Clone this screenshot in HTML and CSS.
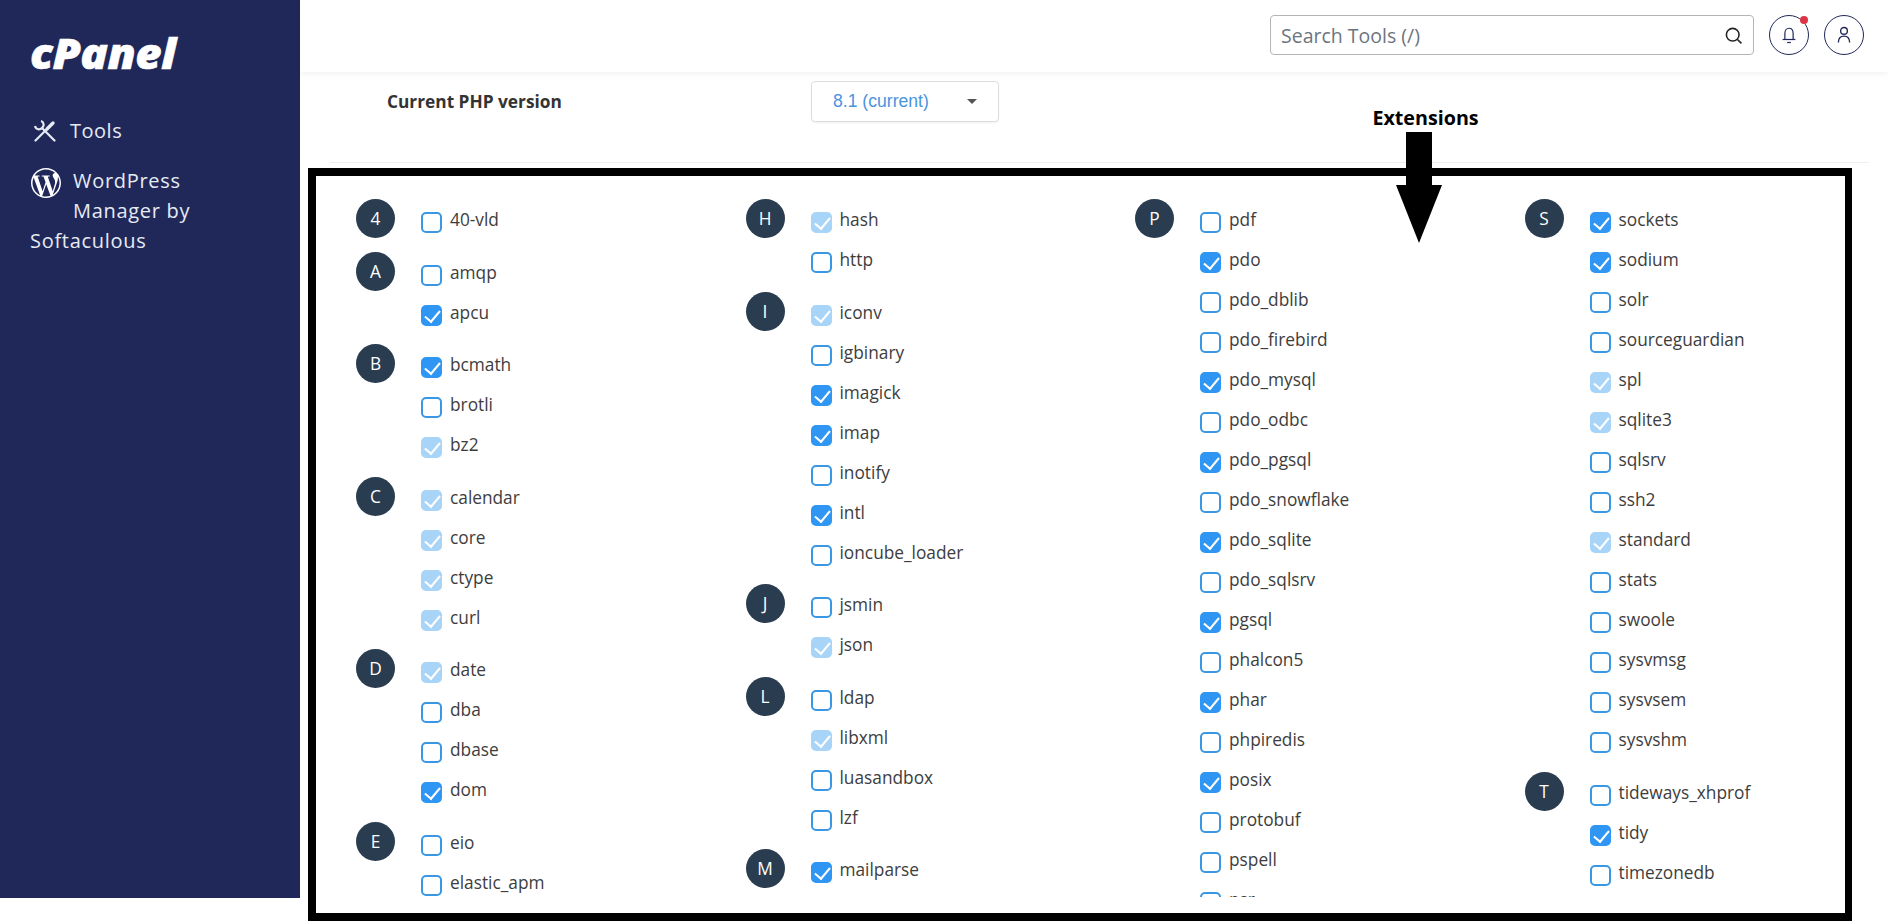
FILE: index.html
```html
<!DOCTYPE html>
<html lang="en">
<head>
  <meta charset="UTF-8">
  <meta name="viewport" content="width=device-width, initial-scale=1.0">
  <title>Select PHP Version</title>
  <link rel="stylesheet" href="styles.css">
</head>
<body>
  <aside class="sidebar">
    <div class="logo">cPanel</div>
    <a class="nav-item nav-tools">
      <svg class="tools-icon" viewBox="0 0 22 22" fill="none" stroke="currentColor" stroke-width="2.2">
        <path d="M7 1 C10 2 10.500 6 8 8 C6 10 2 10 1 6"/>
        <path d="M8 8 L20.500 20.500" stroke-linecap="round"/>
        <path d="M1.500 20.500 L12.500 9.500" stroke-linecap="round"/>
        <path d="M13 9 L19 3" stroke-width="3.4" stroke-linecap="round"/>
      </svg>
      Tools
    </a>
    <a class="nav-item nav-wp">
      <svg class="wp-icon" viewBox="0 0 24 24" fill="currentColor">
        <path d="M21.469 6.825c.84 1.537 1.318 3.3 1.318 5.175 0 3.979-2.156 7.456-5.363 9.325l3.295-9.527c.615-1.54.82-2.771.82-3.864 0-.405-.026-.78-.07-1.11m-7.981.105c.647-.03 1.232-.105 1.232-.105.582-.075.514-.93-.067-.899 0 0-1.755.135-2.88.135-1.064 0-2.85-.15-2.85-.15-.585-.03-.661.855-.075.885 0 0 .54.061 1.125.09l1.68 4.605-2.37 7.08L5.354 6.9c.649-.03 1.234-.1 1.234-.1.585-.075.516-.93-.065-.896 0 0-1.746.138-2.874.138-.2 0-.438-.008-.69-.015C4.911 3.15 8.235 1.215 12 1.215c2.809 0 5.365 1.072 7.286 2.833-.046-.003-.091-.009-.141-.009-1.06 0-1.812.923-1.812 1.914 0 .89.513 1.643 1.06 2.531.411.72.89 1.643.89 2.977 0 .915-.354 1.994-.821 3.479l-1.075 3.585-3.9-11.61.001.014zM12 22.784c-1.059 0-2.081-.153-3.048-.437l3.237-9.406 3.315 9.087c.024.053.05.101.078.149-1.12.393-2.325.609-3.582.609M1.211 12c0-1.564.336-3.05.935-4.39L7.29 21.709C3.694 19.96 1.212 16.271 1.211 12M12 0C5.385 0 0 5.385 0 12s5.385 12 12 12 12-5.385 12-12S18.615 0 12 0"/>
      </svg>
      WordPress Manager by Softaculous
    </a>
  </aside>

  <div class="main">
    <header class="topbar">
      <div class="search">
        <span class="search-text">Search Tools (/)</span>
        <svg class="search-icon" viewBox="0 0 24 24" fill="none" stroke="#222" stroke-width="2">
          <circle cx="11" cy="11" r="8"/>
          <path d="M17 17 L22 22"/>
        </svg>
      </div>
      <button class="round-btn bell">
        <svg viewBox="0 0 24 24" fill="none" stroke="#20285a" stroke-width="1.6">
          <path d="M6.500 18 V10 C6.500 5.500 9 3 12 3 C15 3 17.500 5.500 17.500 10 V18"/>
          <path d="M3.500 18 H20.500"/>
          <path d="M9.500 22 H14.500"/>
        </svg>
        <span class="dot"></span>
      </button>
      <button class="round-btn">
        <svg viewBox="0 0 24 24" fill="none" stroke="#20285a" stroke-width="1.8">
          <circle cx="12" cy="6.500" r="4.500"/>
          <path d="M4.500 22 C4.500 15 8 13.500 12 13.500 C16 13.500 19.500 15 19.500 22"/>
        </svg>
      </button>
    </header>

    <div class="php-row">
      <div class="php-label">Current PHP version</div>
      <div class="php-select">
        <span>8.1 (current)</span>
        <span class="caret"></span>
      </div>
    </div>
    <hr class="divider">

    <div class="frame">
      <div class="ext-list">
        <div class="ext-col">
          <div class="group"><span class="letter">4</span><div class="items">
            <label class="ext"><input type="checkbox">40-vld</label>
          </div></div>
          <div class="group"><span class="letter">A</span><div class="items">
            <label class="ext"><input type="checkbox">amqp</label>
            <label class="ext"><input type="checkbox" checked>apcu</label>
          </div></div>
          <div class="group"><span class="letter">B</span><div class="items">
            <label class="ext"><input type="checkbox" checked>bcmath</label>
            <label class="ext"><input type="checkbox">brotli</label>
            <label class="ext"><input type="checkbox" checked disabled>bz2</label>
          </div></div>
          <div class="group"><span class="letter">C</span><div class="items">
            <label class="ext"><input type="checkbox" checked disabled>calendar</label>
            <label class="ext"><input type="checkbox" checked disabled>core</label>
            <label class="ext"><input type="checkbox" checked disabled>ctype</label>
            <label class="ext"><input type="checkbox" checked disabled>curl</label>
          </div></div>
          <div class="group"><span class="letter">D</span><div class="items">
            <label class="ext"><input type="checkbox" checked disabled>date</label>
            <label class="ext"><input type="checkbox">dba</label>
            <label class="ext"><input type="checkbox">dbase</label>
            <label class="ext"><input type="checkbox" checked>dom</label>
          </div></div>
          <div class="group"><span class="letter">E</span><div class="items">
            <label class="ext"><input type="checkbox">eio</label>
            <label class="ext"><input type="checkbox">elastic_apm</label>
          </div></div>
        </div>

        <div class="ext-col">
          <div class="group"><span class="letter">H</span><div class="items">
            <label class="ext"><input type="checkbox" checked disabled>hash</label>
            <label class="ext"><input type="checkbox">http</label>
          </div></div>
          <div class="group"><span class="letter">I</span><div class="items">
            <label class="ext"><input type="checkbox" checked disabled>iconv</label>
            <label class="ext"><input type="checkbox">igbinary</label>
            <label class="ext"><input type="checkbox" checked>imagick</label>
            <label class="ext"><input type="checkbox" checked>imap</label>
            <label class="ext"><input type="checkbox">inotify</label>
            <label class="ext"><input type="checkbox" checked>intl</label>
            <label class="ext"><input type="checkbox">ioncube_loader</label>
          </div></div>
          <div class="group"><span class="letter">J</span><div class="items">
            <label class="ext"><input type="checkbox">jsmin</label>
            <label class="ext"><input type="checkbox" checked disabled>json</label>
          </div></div>
          <div class="group"><span class="letter">L</span><div class="items">
            <label class="ext"><input type="checkbox">ldap</label>
            <label class="ext"><input type="checkbox" checked disabled>libxml</label>
            <label class="ext"><input type="checkbox">luasandbox</label>
            <label class="ext"><input type="checkbox">lzf</label>
          </div></div>
          <div class="group"><span class="letter">M</span><div class="items">
            <label class="ext"><input type="checkbox" checked>mailparse</label>
          </div></div>
        </div>

        <div class="ext-col">
          <div class="group"><span class="letter">P</span><div class="items">
            <label class="ext"><input type="checkbox">pdf</label>
            <label class="ext"><input type="checkbox" checked>pdo</label>
            <label class="ext"><input type="checkbox">pdo_dblib</label>
            <label class="ext"><input type="checkbox">pdo_firebird</label>
            <label class="ext"><input type="checkbox" checked>pdo_mysql</label>
            <label class="ext"><input type="checkbox">pdo_odbc</label>
            <label class="ext"><input type="checkbox" checked>pdo_pgsql</label>
            <label class="ext"><input type="checkbox">pdo_snowflake</label>
            <label class="ext"><input type="checkbox" checked>pdo_sqlite</label>
            <label class="ext"><input type="checkbox">pdo_sqlsrv</label>
            <label class="ext"><input type="checkbox" checked>pgsql</label>
            <label class="ext"><input type="checkbox">phalcon5</label>
            <label class="ext"><input type="checkbox" checked>phar</label>
            <label class="ext"><input type="checkbox">phpiredis</label>
            <label class="ext"><input type="checkbox" checked>posix</label>
            <label class="ext"><input type="checkbox">protobuf</label>
            <label class="ext"><input type="checkbox">pspell</label>
            <label class="ext"><input type="checkbox">psr</label>
          </div></div>
        </div>

        <div class="ext-col">
          <div class="group"><span class="letter">S</span><div class="items">
            <label class="ext"><input type="checkbox" checked>sockets</label>
            <label class="ext"><input type="checkbox" checked>sodium</label>
            <label class="ext"><input type="checkbox">solr</label>
            <label class="ext"><input type="checkbox">sourceguardian</label>
            <label class="ext"><input type="checkbox" checked disabled>spl</label>
            <label class="ext"><input type="checkbox" checked disabled>sqlite3</label>
            <label class="ext"><input type="checkbox">sqlsrv</label>
            <label class="ext"><input type="checkbox">ssh2</label>
            <label class="ext"><input type="checkbox" checked disabled>standard</label>
            <label class="ext"><input type="checkbox">stats</label>
            <label class="ext"><input type="checkbox">swoole</label>
            <label class="ext"><input type="checkbox">sysvmsg</label>
            <label class="ext"><input type="checkbox">sysvsem</label>
            <label class="ext"><input type="checkbox">sysvshm</label>
          </div></div>
          <div class="group"><span class="letter">T</span><div class="items">
            <label class="ext"><input type="checkbox">tideways_xhprof</label>
            <label class="ext"><input type="checkbox" checked>tidy</label>
            <label class="ext"><input type="checkbox">timezonedb</label>
          </div></div>
        </div>
      </div>
    </div>

    <div class="callout">
      <div class="callout-text">Extensions</div>
      <div class="arrow-shaft"></div>
      <div class="arrow-head"></div>
    </div>
  </div>
</body>
</html>
```

FILE: styles.css
```css
* {
  box-sizing: border-box;
}
body {
  font-family: "Open Sans", sans-serif;
  display: flex;
  align-items: flex-start;
  height: 922px;
  margin: 0;
  overflow: hidden;
  background-color: #FFF;
  color: #3d3d3d;
}

/* sidebar */
.sidebar {
  width: 300px;
  height: 898px;
  flex-shrink: 0;
  padding: 28px 30px 0;
  background-color: #20285a;
  color: #e6ebf3;
  font-size: 20px;
  line-height: 30px;
}
.logo {
  height: 50px;
  margin-bottom: 38px;
  font-size: 43px;
  font-style: italic;
  font-weight: 800;
  line-height: 50px;
  letter-spacing: -0.5px;
  color: #FFF;
  transform: scaleX(1.06);
  transform-origin: left center;
  -webkit-text-stroke: 0.6px #FFF;
}
.nav-item {
  display: block;
}
.nav-tools {
  display: flex;
  align-items: center;
  gap: 14px;
  margin-bottom: 20px;
  padding-left: 4px;
  letter-spacing: 0.5px;
}
.tools-icon {
  width: 22px;
  height: 22px;
}
.nav-wp {
  letter-spacing: 0.7px;
}
.wp-icon {
  float: left;
  width: 30px;
  height: 30px;
  margin: 2px 12px 0 1px;
  color: #FFF;
}

/* top bar */
.main {
  position: relative;
  flex: 1;
  min-width: 0;
}
.topbar {
  display: flex;
  align-items: center;
  justify-content: flex-end;
  gap: 15px;
  height: 72px;
  padding: 0 24px 2px 0;
  box-shadow: 0 2px 6px rgba(0, 0, 0, 0.06);
}
.search {
  display: flex;
  align-items: center;
  justify-content: space-between;
  width: 484px;
  height: 40px;
  padding: 0 10px;
  border: 1px solid #b5b5b5;
  border-radius: 4px;
}
.search-text {
  font-size: 19.5px;
  color: #6c757d;
}
.search-icon {
  width: 19px;
  height: 19px;
}
.round-btn {
  position: relative;
  display: flex;
  align-items: center;
  justify-content: center;
  width: 40px;
  height: 40px;
  padding: 0;
  border: 1px solid #20285a;
  border-radius: 50%;
  background-color: #FFF;
}
.round-btn svg {
  width: 18px;
  height: 18px;
}
.dot {
  position: absolute;
  top: 0;
  right: 0;
  width: 8px;
  height: 8px;
  border-radius: 50%;
  background-color: #dc3545;
}

/* php version */
.php-row {
  display: flex;
  align-items: center;
  margin-top: 9px;
  padding-left: 87px;
}
.php-label {
  width: 424px;
  font-size: 17.3px;
  font-weight: 700;
  color: #333;
}
.php-select {
  display: flex;
  align-items: center;
  justify-content: space-between;
  width: 188px;
  height: 41px;
  padding: 0 21px 0 21px;
  border: 1px solid #ddd;
  border-radius: 4px;
  box-shadow: 0 1px 2px rgba(0, 0, 0, 0.06);
  font-family: "Liberation Sans", Arial, sans-serif;
  font-size: 17.6px;
  color: #4a94e0;
}
.caret {
  border-top: 5px solid #555;
  border-left: 5px solid transparent;
  border-right: 5px solid transparent;
}
.divider {
  margin: 40px 19px 0 30px;
  border: 0;
  border-top: 1px solid #eee;
}

/* extensions */
.frame {
  width: 1544px;
  height: 753px;
  margin: 5px 0 0 8px;
  padding: 23px 0 0 40px;
  border: 8px solid #000;
  border-right-width: 7px;
}
.ext-list {
  display: grid;
  grid-template-columns: repeat(3, 389.5px) 1fr;
  height: 698px;
  overflow: hidden;
}
.group {
  display: flex;
  margin-bottom: 12.6px;
}
.letter {
  display: flex;
  align-items: center;
  justify-content: center;
  width: 39px;
  height: 39px;
  margin-right: 26px;
  flex-shrink: 0;
  border-radius: 50%;
  background-color: #2a3c4f;
  font-size: 17.3px;
  color: #FFF;
}
.ext {
  display: flex;
  align-items: flex-start;
  height: 40px;
  padding-top: 9px;
  font-size: 17.3px;
  line-height: 24px;
}
.ext input {
  position: relative;
  appearance: none;
  width: 21px;
  height: 21px;
  margin: 4px 8px 0 0;
  flex-shrink: 0;
  border: 2px solid #3a97e3;
  border-radius: 5px;
  background-color: #FFF;
}
.ext input:checked {
  border-color: #2f96f3;
  background-color: #2f96f3;
}
.ext input:checked::after {
  content: "";
  position: absolute;
  left: 5px;
  top: 0;
  width: 7px;
  height: 13px;
  border-right: 2px solid #FFF;
  border-bottom: 2px solid #FFF;
  transform: rotate(40deg);
}
.ext input:disabled {
  border-color: #a8d4f8;
  background-color: #a8d4f8;
}

/* annotation drawn over the page */
.callout {
  position: absolute;
  left: 1095px;
  top: 105px;
  width: 47px;
  display: flex;
  flex-direction: column;
  align-items: center;
}
.callout-text {
  margin: 0 -14px 1px 0;
  font-size: 19.7px;
  font-weight: 700;
  line-height: 26px;
  color: #000;
  white-space: nowrap;
}
.arrow-shaft {
  width: 26px;
  height: 53px;
  background-color: #000;
}
.arrow-head {
  border-top: 58px solid #000;
  border-left: 23.5px solid transparent;
  border-right: 23.5px solid transparent;
}
```
